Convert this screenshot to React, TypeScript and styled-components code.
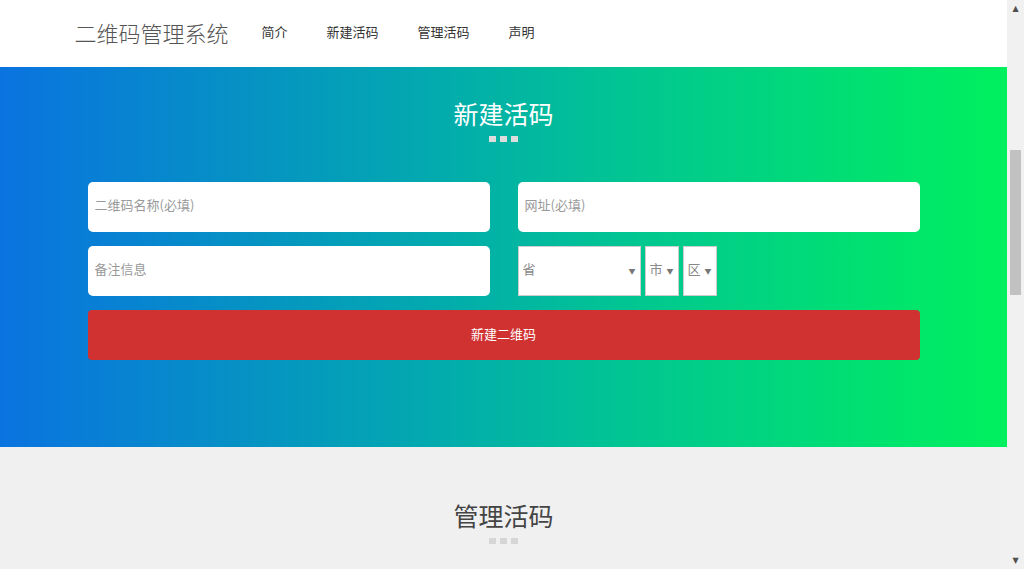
import React from "react";
import styled, { createGlobalStyle } from "styled-components";

const GlobalStyle = createGlobalStyle`
  html, body {
    margin: 0;
    padding: 0;
  }
  body {
    background: #f0f0f0;
    font-family: "Noto Sans CJK SC", "Noto Sans", "Liberation Sans", sans-serif;
    color: #333;
    padding-right: 17px;
  }
  * {
    box-sizing: border-box;
  }
`;

const Header = styled.header`
  height: 67px;
  background: #ffffff;
`;

const HeaderInner = styled.div`
  max-width: 860px;
  margin: 0 auto;
  height: 100%;
  display: flex;
  align-items: center;
  padding-left: 1px;
  padding-bottom: 4px;
`;

const Brand = styled.div`
  font-size: 22px;
  font-weight: 300;
  color: #555;
  margin-right: 33px;
`;

const Nav = styled.nav`
  display: flex;
  align-items: center;
`;

const NavLink = styled.a`
  font-size: 13px;
  color: #333;
  margin-right: 39px;
  text-decoration: none;
  cursor: pointer;
`;

const Hero = styled.section`
  height: 380px;
  background: linear-gradient(90deg, #0a73e0 0%, #03a6b2 40%, #01c98e 65%, #00f05e 100%);
  display: flex;
  flex-direction: column;
  align-items: center;
  padding-top: 29px;
`;

const SectionTitle = styled.h2<{ $dark?: boolean }>`
  margin: 0;
  font-size: 25px;
  font-weight: 400;
  line-height: 34px;
  color: ${(p) => (p.$dark ? "#444" : "#ffffff")};
`;

const Dots = styled.div<{ $dark?: boolean }>`
  display: flex;
  gap: 4px;
  margin-top: 6px;
  span {
    width: 7px;
    height: 6px;
    background: ${(p) => (p.$dark ? "#d6d6d6" : "#dddddd")};
  }
`;

const Form = styled.form`
  width: 832px;
  margin-top: 40px;
  display: flex;
  flex-direction: column;
  gap: 14px;
`;

const Row = styled.div`
  display: grid;
  grid-template-columns: 1fr 1fr;
  column-gap: 28px;
`;

const TextInput = styled.input`
  height: 50px;
  width: 100%;
  border: none;
  border-radius: 5px;
  background: #ffffff;
  padding: 0 7px 5px;
  font-family: inherit;
  font-size: 13px;
  color: #333;
  outline: none;
  &::placeholder {
    color: #999;
  }
`;

const Selects = styled.div`
  display: flex;
  gap: 4px;
`;

const SelectWrap = styled.div<{ $width: number }>`
  position: relative;
  width: ${(p) => p.$width}px;
  height: 50px;
`;

const Select = styled.select`
  appearance: none;
  width: 100%;
  height: 100%;
  border: 1px solid #cccccc;
  border-radius: 0;
  background: #ffffff;
  padding: 0 0 5px 4px;
  font-family: inherit;
  font-size: 13px;
  color: #888;
  outline: none;
`;

const Arrow = styled.span`
  position: absolute;
  right: 5px;
  top: 50%;
  transform: translateY(-50%);
  font-size: 7px;
  color: #777;
  pointer-events: none;
`;

const SubmitButton = styled.button`
  height: 50px;
  width: 100%;
  border: none;
  border-radius: 4px;
  background: #d03232;
  color: #ffffff;
  font-family: inherit;
  font-size: 13px;
  padding-bottom: 5px;
  cursor: pointer;
`;

const Manage = styled.section`
  background: #f0f0f0;
  padding-top: 51px;
  display: flex;
  flex-direction: column;
  align-items: center;
  min-height: 500px;
`;

/* window scrollbar as seen in the screenshot */
const ScrollTrack = styled.div`
  position: fixed;
  top: 0;
  right: 0;
  bottom: 0;
  width: 17px;
  background: #f1f1f1;
  display: flex;
  flex-direction: column;
  justify-content: space-between;
  align-items: center;
`;

const ScrollArrow = styled.div`
  height: 17px;
  display: flex;
  align-items: center;
  justify-content: center;
  font-size: 8px;
  color: #505050;
  font-family: "DejaVu Sans", sans-serif;
`;

const ScrollThumb = styled.div`
  position: absolute;
  top: 150px;
  left: 3px;
  width: 11px;
  height: 145px;
  background: #c1c1c1;
`;

export default function App() {
  return (
    <>
      <GlobalStyle />
      <Header>
        <HeaderInner>
          <Brand>二维码管理系统</Brand>
          <Nav>
            <NavLink>简介</NavLink>
            <NavLink>新建活码</NavLink>
            <NavLink>管理活码</NavLink>
            <NavLink>声明</NavLink>
          </Nav>
        </HeaderInner>
      </Header>

      <Hero>
        <SectionTitle>新建活码</SectionTitle>
        <Dots>
          <span />
          <span />
          <span />
        </Dots>
        <Form onSubmit={(e) => e.preventDefault()}>
          <Row>
            <TextInput placeholder="二维码名称(必填)" />
            <TextInput placeholder="网址(必填)" />
          </Row>
          <Row>
            <TextInput placeholder="备注信息" />
            <Selects>
              <SelectWrap $width={123}>
                <Select defaultValue="">
                  <option value="">省</option>
                </Select>
                <Arrow>▼</Arrow>
              </SelectWrap>
              <SelectWrap $width={34}>
                <Select defaultValue="">
                  <option value="">市</option>
                </Select>
                <Arrow>▼</Arrow>
              </SelectWrap>
              <SelectWrap $width={34}>
                <Select defaultValue="">
                  <option value="">区</option>
                </Select>
                <Arrow>▼</Arrow>
              </SelectWrap>
            </Selects>
          </Row>
          <SubmitButton type="submit">新建二维码</SubmitButton>
        </Form>
      </Hero>

      <Manage>
        <SectionTitle $dark>管理活码</SectionTitle>
        <Dots $dark>
          <span />
          <span />
          <span />
        </Dots>
      </Manage>

      <ScrollTrack>
        <ScrollArrow>▲</ScrollArrow>
        <ScrollThumb />
        <ScrollArrow>▼</ScrollArrow>
      </ScrollTrack>
    </>
  );
}
